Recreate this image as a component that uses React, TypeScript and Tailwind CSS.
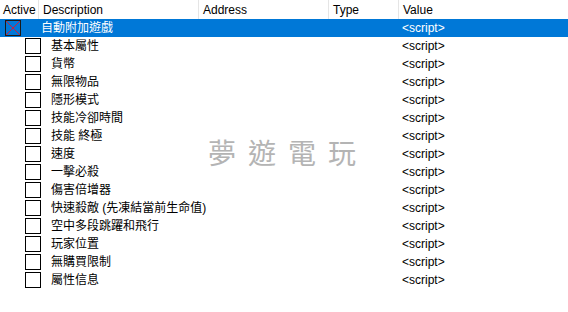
const items = [
  '基本屬性',
  '貨幣',
  '無限物品',
  '隱形模式',
  '技能冷卻時間',
  '技能 終極',
  '速度',
  '一擊必殺',
  '傷害倍增器',
  '快速殺敵 (先凍結當前生命值)',
  '空中多段跳躍和飛行',
  '玩家位置',
  '無購買限制',
  '屬性信息',
];

const font = { fontFamily: '"Liberation Sans", "Noto Sans CJK TC", sans-serif' };

const HeaderCell = ({ label, className }: { label: string; className: string }) => (
  <div className={`h-full pl-1 flex items-center border-r border-[#e5e5e5] ${className}`}>{label}</div>
);

const Row = ({ label, selected, root }: { label: string; selected?: boolean; root?: boolean }) => (
  <div className={`h-[18px] flex items-center ${selected ? 'bg-[#0078d7] text-white' : 'text-black'}`}>
    <div className={`w-[398px] shrink-0 flex items-center ${root ? 'pl-[5px]' : 'pl-[25px]'}`}>
      {root ? (
        <div className="w-4 h-4 border border-[#1a1a1a] relative overflow-hidden">
          <svg viewBox="0 0 16 16" className="absolute inset-0 w-full h-full">
            <line x1="0" y1="0" x2="16" y2="16" stroke="#e81123" strokeWidth="1" />
            <line x1="16" y1="0" x2="0" y2="16" stroke="#e81123" strokeWidth="1" />
          </svg>
        </div>
      ) : (
        <div className="w-4 h-4 border border-black bg-white" />
      )}
      <span className={root ? 'ml-5' : 'ml-[10px]'}>{label}</span>
    </div>
    <div className="pl-1">&lt;script&gt;</div>
  </div>
);

export default function App() {
  return (
    <div className="w-[568px] h-[312px] bg-white relative overflow-hidden text-[12px] leading-none" style={font}>
      <div className="h-[19px] flex text-black">
        <HeaderCell label="Active" className="w-[39px] pl-[3px]" />
        <HeaderCell label="Description" className="w-[160px]" />
        <HeaderCell label="Address" className="w-[130px]" />
        <HeaderCell label="Type" className="w-[70px]" />
        <div className="h-full pl-1 flex items-center">Value</div>
      </div>
      <Row label="自動附加遊戲" selected root />
      {items.map((it) => (
        <Row key={it} label={it} />
      ))}
      <div className="absolute left-[208px] top-[138px] text-[28px] text-[#b4b4b4] tracking-[12px]" style={{ fontFamily: '"Noto Sans CJK TC", sans-serif' }}>
        夢遊電玩
      </div>
    </div>
  );
}
